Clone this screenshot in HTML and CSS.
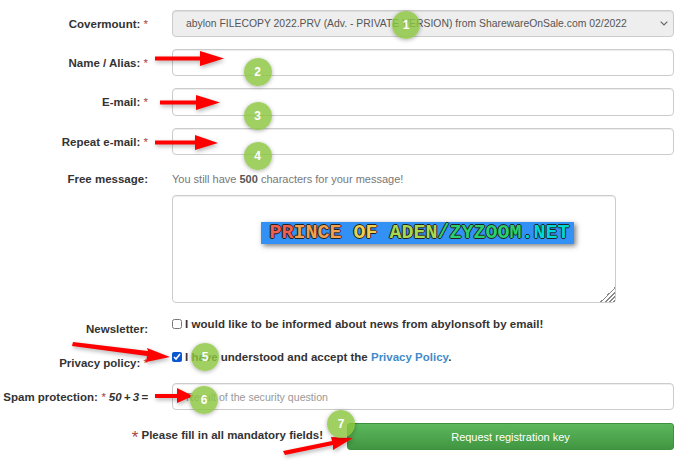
FILE: index.html
```html
<!DOCTYPE html>
<html lang="en">
<head>
    <meta charset="UTF-8">
    <title>Request registration key</title>
    <link rel="stylesheet" href="styles.css">
</head>
<body>
    <form class="reg-form">
        <div class="row">
            <label class="lbl">Covermount: <span class="req">*</span></label>
            <select class="field" disabled>
                <option>abylon FILECOPY 2022.PRV (Adv. - PRIVATE VERSION) from SharewareOnSale.com 02/2022</option>
            </select>
        </div>
        <div class="row">
            <label class="lbl">Name / Alias: <span class="req">*</span></label>
            <input class="field" type="text">
        </div>
        <div class="row row-tall">
            <label class="lbl">E-mail: <span class="req">*</span></label>
            <input class="field" type="email">
        </div>
        <div class="row">
            <label class="lbl">Repeat e-mail: <span class="req">*</span></label>
            <input class="field" type="email">
        </div>
        <div class="row row-hint">
            <label class="lbl">Free message:</label>
            <p class="hint">You still have <b>500</b> characters for your message!</p>
        </div>
        <div class="row row-message">
            <textarea class="field message"></textarea>
        </div>
        <div class="row row-check">
            <label class="lbl lbl-low">Newsletter:</label>
            <label class="check check-wide"><input type="checkbox"><span>I would like to be informed about news from abylonsoft by email!</span></label>
        </div>
        <div class="row row-check">
            <label class="lbl lbl-low lbl-lower">Privacy policy: <span class="req">*</span></label>
            <label class="check"><input type="checkbox" checked><span>I have understood and accept the <a href="#">Privacy Policy</a>.</span></label>
        </div>
        <div class="row row-spam">
            <label class="lbl">Spam protection: <span class="req"><i>*</i></span> <i class="sum">50 + 3 =</i></label>
            <input class="field" type="text" placeholder="Result of the security question">
        </div>
        <div class="row row-submit">
            <p class="mandatory"><span class="req-big">*</span> Please fill in all mandatory fields!</p>
            <button class="btn-submit" type="button">Request registration key</button>
        </div>
    </form>

    <!-- banner stamped over the message box -->
    <div class="banner"><span class="c-red">PR</span><span class="c-orange">INCE</span> <span class="c-yellow">OF</span> <span class="c-lime">ADEN</span><span class="c-green">/ZYZOOM</span><span class="c-cyan">.NET</span></div>

    <!-- tutorial markers drawn over the form -->
    <svg class="arrows" width="686" height="464" viewBox="0 0 686 464">
        <g fill="#f00">
            <polygon points="155,56.500 200,56.500 200,51 224,58.500 200,66 200,60.500 155,60.500"/>
            <polygon points="160,100.500 196,100.500 196,95 220,102.500 196,110 196,104.500 160,104.500"/>
            <polygon points="155,140.500 195,140.500 195,135 218,143 195,150 195,144.500 155,144.500"/>
            <polygon points="73,342 148,351 147,348 170,357 146,362 147,356 72,346"/>
            <polygon points="155,394 177,394 177,388 193,396 177,403 177,398 155,398"/>
            <polygon points="283,451 332,441 331,437 353,438 333,450 333,445 285,455"/>
        </g>
    </svg>
    <span class="badge b1">1</span>
    <span class="badge b2">2</span>
    <span class="badge b3">3</span>
    <span class="badge b4">4</span>
    <span class="badge b5">5</span>
    <span class="badge b6">6</span>
    <span class="badge b7">7</span>
</body>
</html>
```

FILE: styles.css
```css
:root {
    --text-color: #333; --border-color: #ccc; --req-color: #a94442; --link-color: #428bca;
}
html, body { height: 464px; overflow: hidden; }
body { margin: 0; background-color: #fff; color: var(--text-color); font-family: 'Liberation Sans', Arial, sans-serif; font-size: 11.5px; position: relative; }

.reg-form { width: 674px; padding-top: 10px; display: flex; flex-direction: column; }
.row { display: flex; align-items: center; column-gap: 24px; height: 27px; margin-bottom: 12px; }
.row-tall { height: 28px; }
.row-hint { height: 16px; margin-bottom: 8px; margin-top: 4px; }
.row-message { height: 108px; margin-bottom: 13px; padding-left: 172px; }
.row-check { height: 16px; margin-bottom: 17px; }
.row-spam { margin-top: 1px; margin-bottom: 13px; }
.row-submit { margin-bottom: 0; }

.lbl { flex: 0 0 148px; text-align: right; font-weight: bold; white-space: nowrap; }
.lbl-low { position: relative; top: 5px; }
.lbl-lower { top: 6px; }
.req { color: var(--req-color); font-weight: normal; }
.sum { word-spacing: -1px; }

.field { flex: 1; min-width: 0; height: 100%; box-sizing: border-box; border: 1px solid var(--border-color); border-radius: 4px; padding: 0 13px; background-color: #fff; color: #555; font-family: inherit; font-size: 10.4px; outline: none; box-shadow: inset 0 1px 1px rgba(0,0,0,.075); }
select.field { appearance: none; opacity: 1; background: #eee url("data:image/svg+xml,%3Csvg xmlns='http://www.w3.org/2000/svg' width='8' height='5'%3E%3Cpath d='M.7.7 4 4l3.3-3.3' fill='none' stroke='%23666' stroke-width='1.2'/%3E%3C/svg%3E") no-repeat right 5px center; }
.field::placeholder { color: #999; }
input[placeholder] { font-size: 10.6px; }
.message { flex: none; width: 444px; height: 108px; padding: 6px 12px; }
.message::-webkit-resizer { background: linear-gradient(135deg, #fff 50%, transparent 50%), repeating-linear-gradient(135deg, #fff 0 1.5px, #888 1.5px 3px); }

.hint { margin: 0; color: #777; font-size: 11px; }
.hint b { color: #555; }
.check { font-weight: bold; display: flex; align-items: center; white-space: nowrap; column-gap: 3px; }
.check-wide { letter-spacing: .06px; }
.check input { margin: 0; width: 10px; height: 10px; accent-color: #0b57d0; }
.check a { color: var(--link-color); text-decoration: none; }

.mandatory { flex: 1; margin: 0; text-align: right; font-weight: bold; }
.req-big { color: var(--req-color); font-size: 17px; font-weight: normal; line-height: 12px; vertical-align: -4px; }
.btn-submit { flex: 0 0 327px; height: 27px; border: 1px solid #3e8f3e; border-radius: 3px; background: linear-gradient(to bottom, #5cb85c, #419641); color: #fff; font-family: inherit; font-size: 11px; padding: 0; }

.banner { position: absolute; left: 261px; top: 222px; box-sizing: border-box; width: 313px; height: 22px; padding-left: 4px; line-height: 22px; background-color: #3391f5; text-align: center; font-family: 'Liberation Mono', monospace; font-size: 20px; font-weight: bold; white-space: pre; box-shadow: 2px 2px 5px rgba(0,0,0,.5); text-shadow: 1px 0 0 #222, -1px 0 0 #222, 0 1px 0 #222, 0 -1px 0 #222; }
.c-red { color: #f0604f; }
.c-orange { color: #f0a050; }
.c-yellow { color: #ecd050; }
.c-lime { color: #a8d850; }
.c-green { color: #28d070; }
.c-cyan { color: #00d8d8; }

.arrows { position: absolute; left: 0; top: 0; pointer-events: none; filter: drop-shadow(1px 2px 2px rgba(0,0,0,.3)); }

.badge { position: absolute; width: 28px; height: 28px; margin: -14px 0 0 -14px; border-radius: 50%; background-color: rgba(140,198,63,.82); box-shadow: 0 1px 4px rgba(0,0,0,.3); color: #fff; font-family: 'Liberation Sans', sans-serif; font-size: 12px; font-weight: bold; line-height: 28px; text-align: center; }
.b1 { left: 406px; top: 25px; }
.b2 { left: 257.500px; top: 72px; }
.b3 { left: 257.500px; top: 116px; }
.b4 { left: 257.500px; top: 156px; }
.b5 { left: 205px; top: 357px; }
.b6 { left: 204px; top: 400px; }
.b7 { left: 341px; top: 424px; }
```
